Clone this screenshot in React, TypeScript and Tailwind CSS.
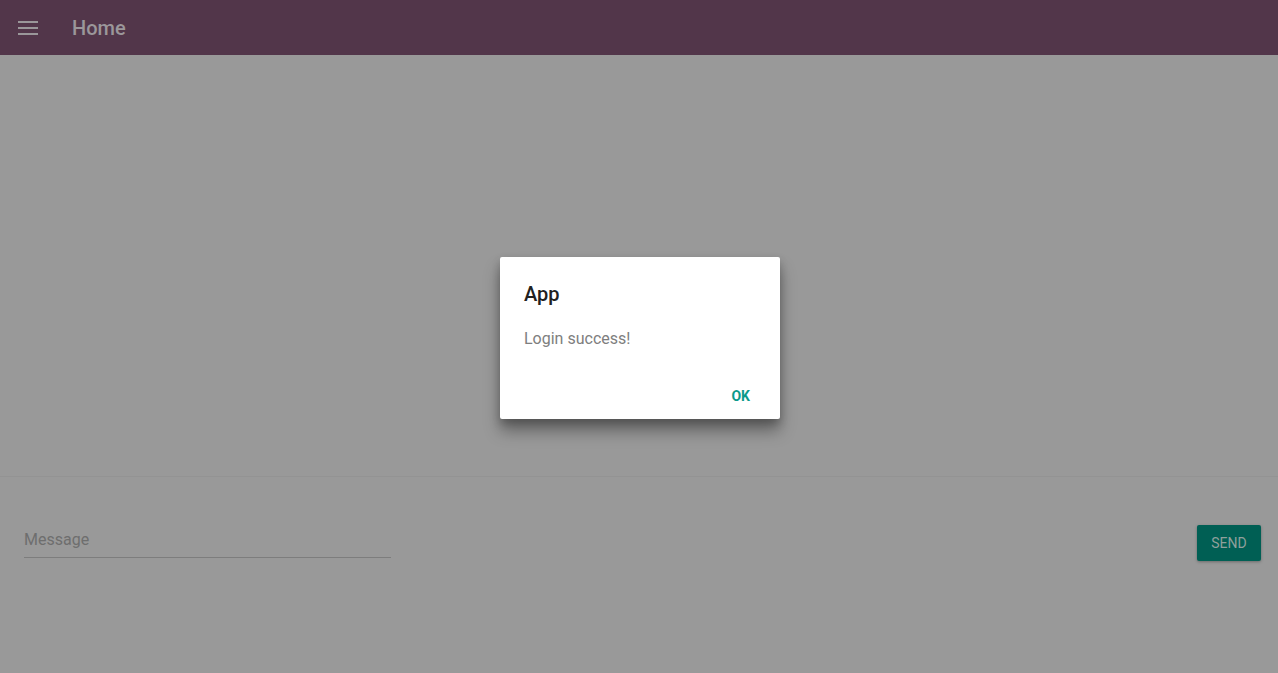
import React from "react";

export default function App() {
  return (
    <div
      className="relative w-[1278px] h-[673px] overflow-hidden bg-[#999999] flex flex-col"
      style={{ fontFamily: "Roboto, 'Noto Sans', sans-serif" }}
    >
      <header className="h-[55px] bg-[#52364a] flex items-center shrink-0">
        <div className="w-[56px] flex justify-center">
          <svg width="20" height="14" viewBox="0 0 20 14">
            <rect x="0" y="0" width="20" height="2" fill="#9a979a" />
            <rect x="0" y="6" width="20" height="2" fill="#9a979a" />
            <rect x="0" y="12" width="20" height="2" fill="#9a979a" />
          </svg>
        </div>
        <div className="ml-[16px] text-[20px] font-medium text-[#9b979a]">Home</div>
      </header>
      <main className="flex-1" />
      <footer className="h-[197px] border-t border-[#939393] flex items-start justify-between px-[24px] pt-[48px] pr-[17px]">
        <div className="w-[367px] mt-[3px] border-b border-[#7d7d7d] pb-[5px] text-[16px] text-[#6e6e6e]">
          Message
        </div>
        <button className="w-[64px] h-[36px] rounded-[2px] bg-[#005f54] text-[#8fa09c] text-[14px] shadow-[0_1px_3px_rgba(0,0,0,0.3)]">
          SEND
        </button>
      </footer>
      <div className="absolute left-[500px] top-[257px] w-[280px] h-[162px] bg-white rounded-[2px] shadow-[0_12px_16px_rgba(0,0,0,0.35),0_4px_8px_rgba(0,0,0,0.2)] flex flex-col">
        <div className="px-[24px] pt-[24px] text-[20px] font-medium text-[#212121] leading-[26px]">App</div>
        <div className="px-[24px] pt-[21px] text-[16px] text-[#7e7e7e] leading-[22px]">Login success!</div>
        <div className="flex-1" />
        <div className="flex justify-end pr-[30px] pb-[12px]">
          <span className="text-[14px] font-bold text-[#0c9a8b]">OK</span>
        </div>
      </div>
    </div>
  );
}
